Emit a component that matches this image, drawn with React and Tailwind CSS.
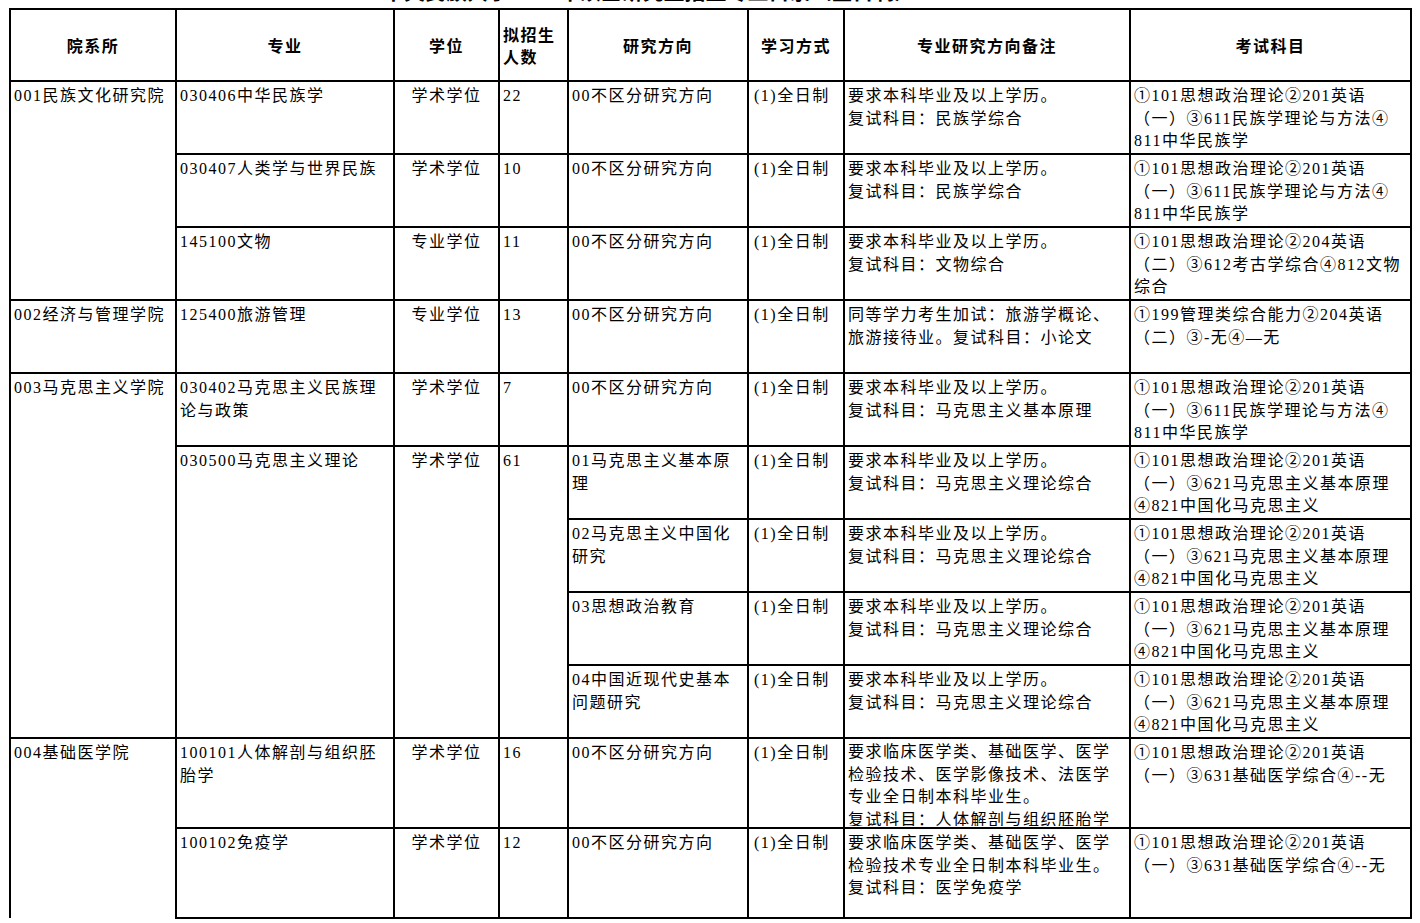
import React from "react";

const F = { fontFamily: '"Liberation Serif", "Noto Sans CJK SC", serif' };

const cell = "border-2 border-black align-top px-[3px] pt-[3px] whitespace-nowrap";
const mcell = "border-2 border-black align-top pl-[5px] pr-[2px] pt-[3px] whitespace-nowrap";
const hcell = "border-2 border-black align-middle text-center whitespace-nowrap font-bold";

function Lines({ lines }) {
  return (
    <>
      {lines.map((l, i) => (
        <div key={i}>{l}</div>
      ))}
    </>
  );
}

const note1 = (subj) => ["要求本科毕业及以上学历。", "复试科目：" + subj];
const exam611 = ["①101思想政治理论②201英语", "（一）③611民族学理论与方法④", "811中华民族学"];
const exam621 = ["①101思想政治理论②201英语", "（一）③621马克思主义基本原理", "④821中国化马克思主义"];
const exam631 = ["①101思想政治理论②201英语", "（一）③631基础医学综合④--无"];

export default function App() {
  return (
    <div className="bg-white w-[1420px] h-[923px] overflow-hidden text-black" style={F}>
      <div className="h-[8px] overflow-hidden">
        <div
          className="mt-[-22px] ml-[383px] text-[21px] leading-[24px] font-bold whitespace-nowrap"
          style={{ fontFamily: '"Noto Sans CJK SC", sans-serif' }}
        >
          中央民族大学2025年硕士研究生招生专业目录（全日制）
        </div>
      </div>
      <table className="ml-[9px] border-collapse table-fixed w-[1401px] text-[16px] leading-[22.5px] tracking-[1.5px]">
        <colgroup>
          <col className="w-[166px]" />
          <col className="w-[218px]" />
          <col className="w-[105px]" />
          <col className="w-[69px]" />
          <col className="w-[180px]" />
          <col className="w-[96px]" />
          <col className="w-[286px]" />
          <col className="w-[281px]" />
        </colgroup>
        <thead>
          <tr className="h-[72px]" style={{ fontFamily: '"Noto Sans CJK SC", sans-serif' }}>
            <th className={hcell}>院系所</th>
            <th className={hcell}>专业</th>
            <th className={hcell}>学位</th>
            <th className="border-2 border-black align-middle text-left pl-[3px] font-bold leading-[22px] whitespace-nowrap">
              <div>拟招生</div>
              <div>人数</div>
            </th>
            <th className={hcell}>研究方向</th>
            <th className={hcell}>学习方式</th>
            <th className={hcell}>专业研究方向备注</th>
            <th className={hcell}>考试科目</th>
          </tr>
        </thead>
        <tbody>
          <tr className="h-[73px]">
            <td rowSpan={3} className={cell}>001民族文化研究院</td>
            <td className={cell}>030406中华民族学</td>
            <td className={cell + " text-center"}>学术学位</td>
            <td className={cell}>22</td>
            <td className={cell}>00不区分研究方向</td>
            <td className={mcell}>(1)全日制</td>
            <td className={cell}><Lines lines={note1("民族学综合")} /></td>
            <td className={cell}><Lines lines={exam611} /></td>
          </tr>
          <tr className="h-[73px]">
            <td className={cell}>030407人类学与世界民族</td>
            <td className={cell + " text-center"}>学术学位</td>
            <td className={cell}>10</td>
            <td className={cell}>00不区分研究方向</td>
            <td className={mcell}>(1)全日制</td>
            <td className={cell}><Lines lines={note1("民族学综合")} /></td>
            <td className={cell}><Lines lines={exam611} /></td>
          </tr>
          <tr className="h-[73px]">
            <td className={cell}>145100文物</td>
            <td className={cell + " text-center"}>专业学位</td>
            <td className={cell}>11</td>
            <td className={cell}>00不区分研究方向</td>
            <td className={mcell}>(1)全日制</td>
            <td className={cell}><Lines lines={note1("文物综合")} /></td>
            <td className={cell}>
              <Lines lines={["①101思想政治理论②204英语", "（二）③612考古学综合④812文物", "综合"]} />
            </td>
          </tr>
          <tr className="h-[73px]">
            <td className={cell}>002经济与管理学院</td>
            <td className={cell}>125400旅游管理</td>
            <td className={cell + " text-center"}>专业学位</td>
            <td className={cell}>13</td>
            <td className={cell}>00不区分研究方向</td>
            <td className={mcell}>(1)全日制</td>
            <td className={cell}>
              <Lines lines={["同等学力考生加试：旅游学概论、", "旅游接待业。复试科目：小论文"]} />
            </td>
            <td className={cell}>
              <Lines lines={["①199管理类综合能力②204英语", "（二）③-无④—无"]} />
            </td>
          </tr>
          <tr className="h-[73px]">
            <td rowSpan={5} className={cell}>003马克思主义学院</td>
            <td className={cell}><Lines lines={["030402马克思主义民族理", "论与政策"]} /></td>
            <td className={cell + " text-center"}>学术学位</td>
            <td className={cell}>7</td>
            <td className={cell}>00不区分研究方向</td>
            <td className={mcell}>(1)全日制</td>
            <td className={cell}><Lines lines={note1("马克思主义基本原理")} /></td>
            <td className={cell}><Lines lines={exam611} /></td>
          </tr>
          <tr className="h-[73px]">
            <td rowSpan={4} className={cell}>030500马克思主义理论</td>
            <td rowSpan={4} className={cell + " text-center"}>学术学位</td>
            <td rowSpan={4} className={cell}>61</td>
            <td className={cell}><Lines lines={["01马克思主义基本原", "理"]} /></td>
            <td className={mcell}>(1)全日制</td>
            <td className={cell}><Lines lines={note1("马克思主义理论综合")} /></td>
            <td className={cell}><Lines lines={exam621} /></td>
          </tr>
          <tr className="h-[73px]">
            <td className={cell}><Lines lines={["02马克思主义中国化", "研究"]} /></td>
            <td className={mcell}>(1)全日制</td>
            <td className={cell}><Lines lines={note1("马克思主义理论综合")} /></td>
            <td className={cell}><Lines lines={exam621} /></td>
          </tr>
          <tr className="h-[73px]">
            <td className={cell}>03思想政治教育</td>
            <td className={mcell}>(1)全日制</td>
            <td className={cell}><Lines lines={note1("马克思主义理论综合")} /></td>
            <td className={cell}><Lines lines={exam621} /></td>
          </tr>
          <tr className="h-[73px]">
            <td className={cell}><Lines lines={["04中国近现代史基本", "问题研究"]} /></td>
            <td className={mcell}>(1)全日制</td>
            <td className={cell}><Lines lines={note1("马克思主义理论综合")} /></td>
            <td className={cell}><Lines lines={exam621} /></td>
          </tr>
          <tr className="h-[90px]">
            <td rowSpan={2} className={cell + " border-b-0"}>004基础医学院</td>
            <td className={cell}><Lines lines={["100101人体解剖与组织胚", "胎学"]} /></td>
            <td className={cell + " text-center"}>学术学位</td>
            <td className={cell}>16</td>
            <td className={cell}>00不区分研究方向</td>
            <td className={mcell}>(1)全日制</td>
            <td className="border-2 border-black align-top px-[3px] pt-0 whitespace-nowrap">
              <div className="h-[87px] overflow-hidden pt-[2px]">
                <Lines
                  lines={[
                    "要求临床医学类、基础医学、医学",
                    "检验技术、医学影像技术、法医学",
                    "专业全日制本科毕业生。",
                    "复试科目：人体解剖与组织胚胎学",
                  ]}
                />
              </div>
            </td>
            <td className={cell}><Lines lines={exam631} /></td>
          </tr>
          <tr className="h-[90px]">
            <td className={cell}>100102免疫学</td>
            <td className={cell + " text-center"}>学术学位</td>
            <td className={cell}>12</td>
            <td className={cell}>00不区分研究方向</td>
            <td className={mcell}>(1)全日制</td>
            <td className={cell}>
              <Lines
                lines={[
                  "要求临床医学类、基础医学、医学",
                  "检验技术专业全日制本科毕业生。",
                  "复试科目：医学免疫学",
                ]}
              />
            </td>
            <td className={cell}><Lines lines={exam631} /></td>
          </tr>
        </tbody>
      </table>
    </div>
  );
}
